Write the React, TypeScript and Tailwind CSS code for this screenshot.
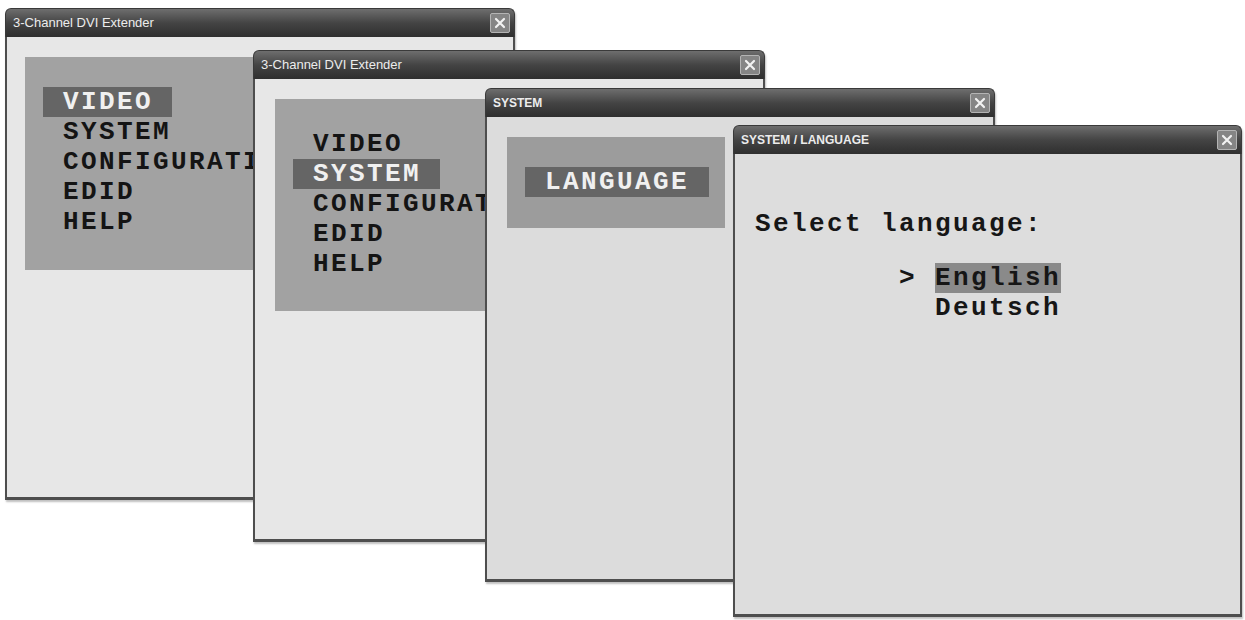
import React from 'react';

interface WindowProps {
  title: string;
  boldTitle?: boolean;
  frame: string;
  body: string;
  children?: React.ReactNode;
}

const CloseButton = () => (
  <div className="w-[20px] h-[20px] rounded-[2px] border border-[#b4b4b4] bg-[#858585] flex items-center justify-center">
    <svg className="w-[12px] h-[12px]" viewBox="0 0 12 12" fill="none" stroke="#f2f2f2" strokeWidth="2.2" strokeLinecap="round">
      <path d="M2 2l8 8M10 2l-8 8" />
    </svg>
  </div>
);

const Window: React.FC<WindowProps> = ({ title, boldTitle, frame, body, children }) => (
  <div className={`absolute flex flex-col rounded-t-[6px] shadow-[1px_2px_2px_rgba(0,0,0,0.25)] ${frame}`}>
    <div className="h-[29px] shrink-0 flex items-center justify-between pl-[7px] pr-[4px] rounded-t-[6px] bg-gradient-to-b from-[#6e6e6e] via-[#444] to-[#2f2f2f] border border-b-0 border-[#3a3a3a]">
      <span
        className={`text-[#ececec] font-['Liberation_Sans',Arial,sans-serif] ${boldTitle ? 'text-[12px] font-bold' : 'text-[13px]'}`}
      >
        {title}
      </span>
      <CloseButton />
    </div>
    <div className={`flex-1 min-h-0 overflow-hidden border-l-2 border-r-2 border-b-[3px] border-[#4e4e4e] ${body}`}>
      {children}
    </div>
  </div>
);

// 18px per character cell, like the device's Courier OSD font
const mono = "font-['Liberation_Mono','Courier_New',monospace] font-bold text-[26px] leading-[30px] tracking-[2.4px]";

const MenuItem = ({ label, active }: { label: string; active?: boolean }) => (
  <div className="h-[30px] flex">
    <span
      className={`whitespace-pre pl-[20px] pr-[19px] ${active ? 'bg-[#656565] text-[#f0f0f0]' : 'text-[#141414]'}`}
    >
      {label}
    </span>
  </div>
);

const MainMenu = ({ active, panel }: { active: string; panel: string }) => (
  <div className={`bg-[#a2a2a2] flex flex-col pt-[30px] pl-[18px] overflow-hidden ${mono} ${panel}`}>
    {['VIDEO', 'SYSTEM', 'CONFIGURATION', 'EDID', 'HELP'].map((m) => (
      <MenuItem key={m} label={m} active={m === active} />
    ))}
  </div>
);

export default function App() {
  return (
    <div className="relative w-[1245px] h-[620px] bg-white overflow-hidden">
      <Window
        title="3-Channel DVI Extender"
        frame="left-[5px] top-[8px] w-[510px] h-[492px]"
        body="bg-[#e7e7e7] pt-[18px] pl-[18px]"
      >
        <div className="pt-[2px]">
          <MainMenu active="VIDEO" panel="w-[320px] h-[213px]" />
        </div>
      </Window>

      <Window
        title="3-Channel DVI Extender"
        frame="left-[253px] top-[50px] w-[512px] h-[492px]"
        body="bg-[#e7e7e7] pt-[20px] pl-[20px]"
      >
        <MainMenu active="SYSTEM" panel="w-[320px] h-[212px]" />
      </Window>

      <Window
        title="SYSTEM"
        boldTitle
        frame="left-[485px] top-[88px] w-[510px] h-[494px]"
        body="bg-[#dcdcdc] pt-[20px] pl-[20px]"
      >
        <div className={`bg-[#9c9c9c] w-[218px] h-[91px] pt-[30px] pl-[18px] ${mono}`}>
          <div className="h-[30px] flex">
            <span className="bg-[#656565] text-[#f0f0f0] px-[20px]">LANGUAGE</span>
          </div>
        </div>
      </Window>

      <Window
        title="SYSTEM / LANGUAGE"
        boldTitle
        frame="left-[733px] top-[125px] w-[509px] h-[492px]"
        body="bg-[#dddddd] pt-[55px] pl-[20px]"
      >
        <div className={`text-[#161616] ${mono}`}>
          <div className="h-[30px] whitespace-pre">Select language:</div>
          <div className="h-[24px]" />
          <div className="h-[30px] flex whitespace-pre">
            <span>{'        > '}</span>
            <span className="bg-[#8a8a8a]">English</span>
          </div>
          <div className="h-[30px] whitespace-pre">{'          Deutsch'}</div>
        </div>
      </Window>
    </div>
  );
}
